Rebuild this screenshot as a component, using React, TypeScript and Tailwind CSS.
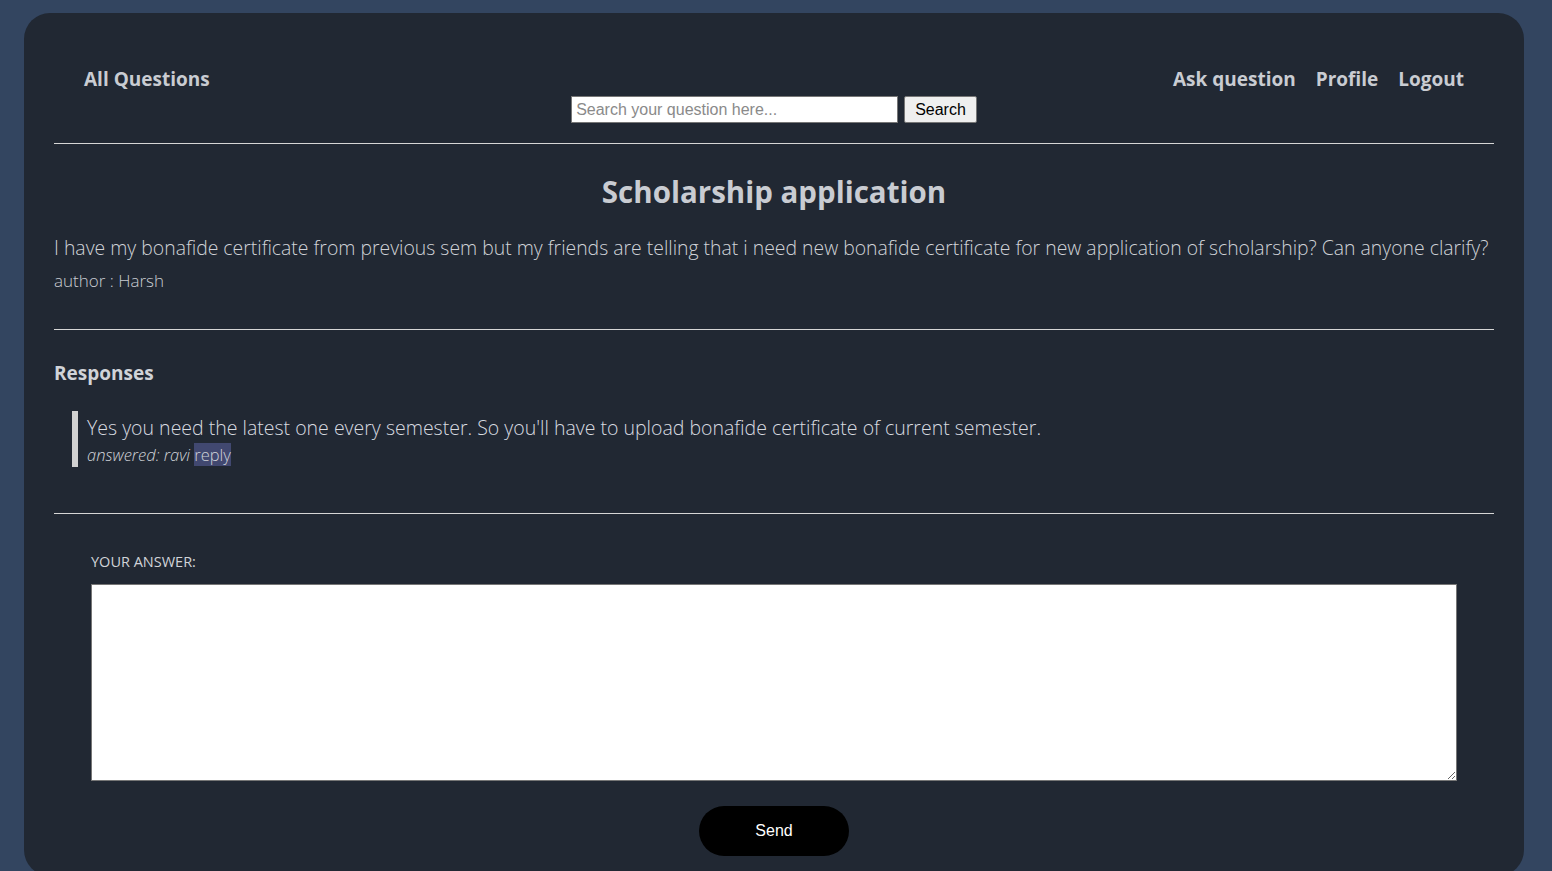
import React from "react";

export default function App() {
  const seg = { fontFamily: '"Open Sans", "Noto Sans", sans-serif' };
  return (
    <div className="min-h-[871px] bg-[#334560] pt-[13px] pl-[24px]" style={seg}>
      <div className="w-[1500px] bg-[#212833] rounded-[26px] min-h-[858px] px-[30px] text-[#cfd2d8]">
        <nav className="grid grid-cols-[1fr_auto_1fr] items-start pt-[57px] px-[30px] h-[130px]">
          <a className="text-[19px] font-bold text-[#c9ccd2] leading-none">All Questions</a>
          <form className="flex gap-[6px] mt-[26px]" style={{ fontFamily: '"Liberation Sans", Arial, sans-serif' }}>
            <input
              className="w-[327px] h-[27px] bg-white border border-[#767676] px-[4px] text-[16px] text-black placeholder:text-[#8a8a8a] outline-none"
              placeholder="Search your question here..."
            />
            <button type="button" className="h-[27px] px-[10px] bg-[#efefef] border border-[#767676] rounded-[2px] text-[16px] text-black">
              Search
            </button>
          </form>
          <div className="flex justify-end gap-[20px] text-[19px] font-bold text-[#c9ccd2] leading-none">
            <a>Ask question</a>
            <a>Profile</a>
            <a>Logout</a>
          </div>
        </nav>
        <hr className="border-t border-[#d6d6d6]" />
        <h1 className="text-center text-[29.5px] font-bold text-[#c9ccd2] mt-[33px] leading-none">Scholarship application</h1>
        <p className="text-[19.4px] font-light text-[#d0d3d8] mt-[31px] leading-none whitespace-nowrap">
          I have my bonafide certificate from previous sem but my friends are telling that i need new bonafide certificate for new application of scholarship? Can anyone clarify?
        </p>
        <p className="text-[17px] font-light text-[#c9ccd2] mt-[15px] leading-none">author : Harsh</p>
        <hr className="border-t border-[#d6d6d6] mt-[40px]" />
        <h3 className="text-[19px] font-bold text-[#d0d3d8] mt-[34px] leading-none">Responses</h3>
        <div className="ml-[18px] mt-[28px] border-l-[6px] border-[#d1d1d1] pl-[9px] pt-[7px] pb-[3px]">
          <p className="text-[19.5px] font-light text-[#d8dbe0] leading-none">
            Yes you need the latest one every semester. So you'll have to upload bonafide certificate of current semester.
          </p>
          <p className="text-[16.5px] font-light text-[#d0d3d8] mt-[10px] leading-none">
            <i>answered: ravi</i> <span className="bg-[#414870] not-italic">reply</span>
          </p>
        </div>
        <hr className="border-t border-[#d6d6d6] mt-[46px]" />
        <div className="px-[37px] pt-[41px] pb-[20px]">
          <label className="block text-[14.5px] text-[#d0d3d8] leading-none">YOUR ANSWER:</label>
          <textarea className="block w-full h-[197px] mt-[15px] bg-white border border-[#767676] text-black" />
          <div className="flex justify-center mt-[25px]">
            <button
              type="button"
              className="w-[150px] h-[50px] rounded-full bg-black text-white text-[16px] font-normal"
              style={{ fontFamily: '"Liberation Sans", Arial, sans-serif' }}
            >
              Send
            </button>
          </div>
        </div>
      </div>
    </div>
  );
}
